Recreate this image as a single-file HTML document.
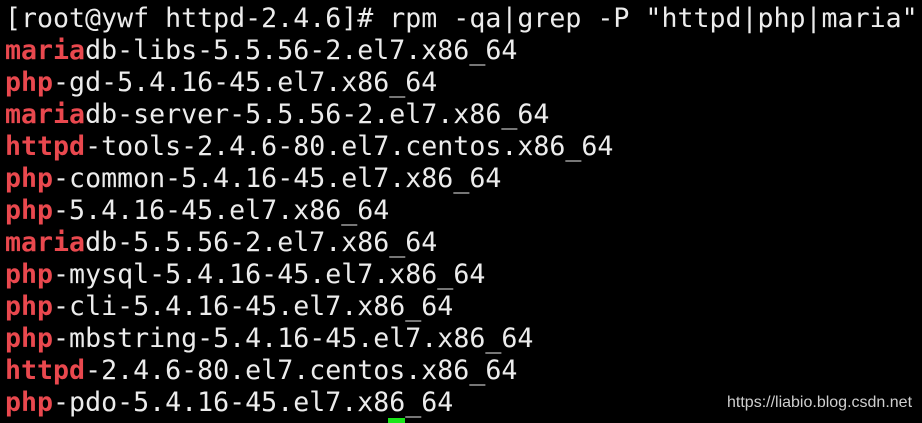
<!DOCTYPE html>
<html><head><meta charset="utf-8"><style>
html,body{margin:0;padding:0;background:#000;width:922px;height:423px;overflow:hidden}
pre{margin:0;position:absolute;left:5px;top:3px;font-family:"DejaVu Sans Mono","Liberation Mono",monospace;font-size:26.6px;line-height:32px;color:#ececec}
b{color:#e9484e}
.wm{position:absolute;left:727px;top:394px;font-family:"Liberation Sans",sans-serif;font-size:16px;color:#cfcfcf}
.cur{position:absolute;left:388px;top:418px;width:17px;height:5px;background:#19e619}
</style></head><body>
<pre>[root@ywf httpd-2.4.6]# rpm -qa|grep -P "httpd|php|maria"
<b>maria</b>db-libs-5.5.56-2.el7.x86_64
<b>php</b>-gd-5.4.16-45.el7.x86_64
<b>maria</b>db-server-5.5.56-2.el7.x86_64
<b>httpd</b>-tools-2.4.6-80.el7.centos.x86_64
<b>php</b>-common-5.4.16-45.el7.x86_64
<b>php</b>-5.4.16-45.el7.x86_64
<b>maria</b>db-5.5.56-2.el7.x86_64
<b>php</b>-mysql-5.4.16-45.el7.x86_64
<b>php</b>-cli-5.4.16-45.el7.x86_64
<b>php</b>-mbstring-5.4.16-45.el7.x86_64
<b>httpd</b>-2.4.6-80.el7.centos.x86_64
<b>php</b>-pdo-5.4.16-45.el7.x86_64</pre>
<div class="wm">https://liabio.blog.csdn.net</div>
<div class="cur"></div>
</body></html>
